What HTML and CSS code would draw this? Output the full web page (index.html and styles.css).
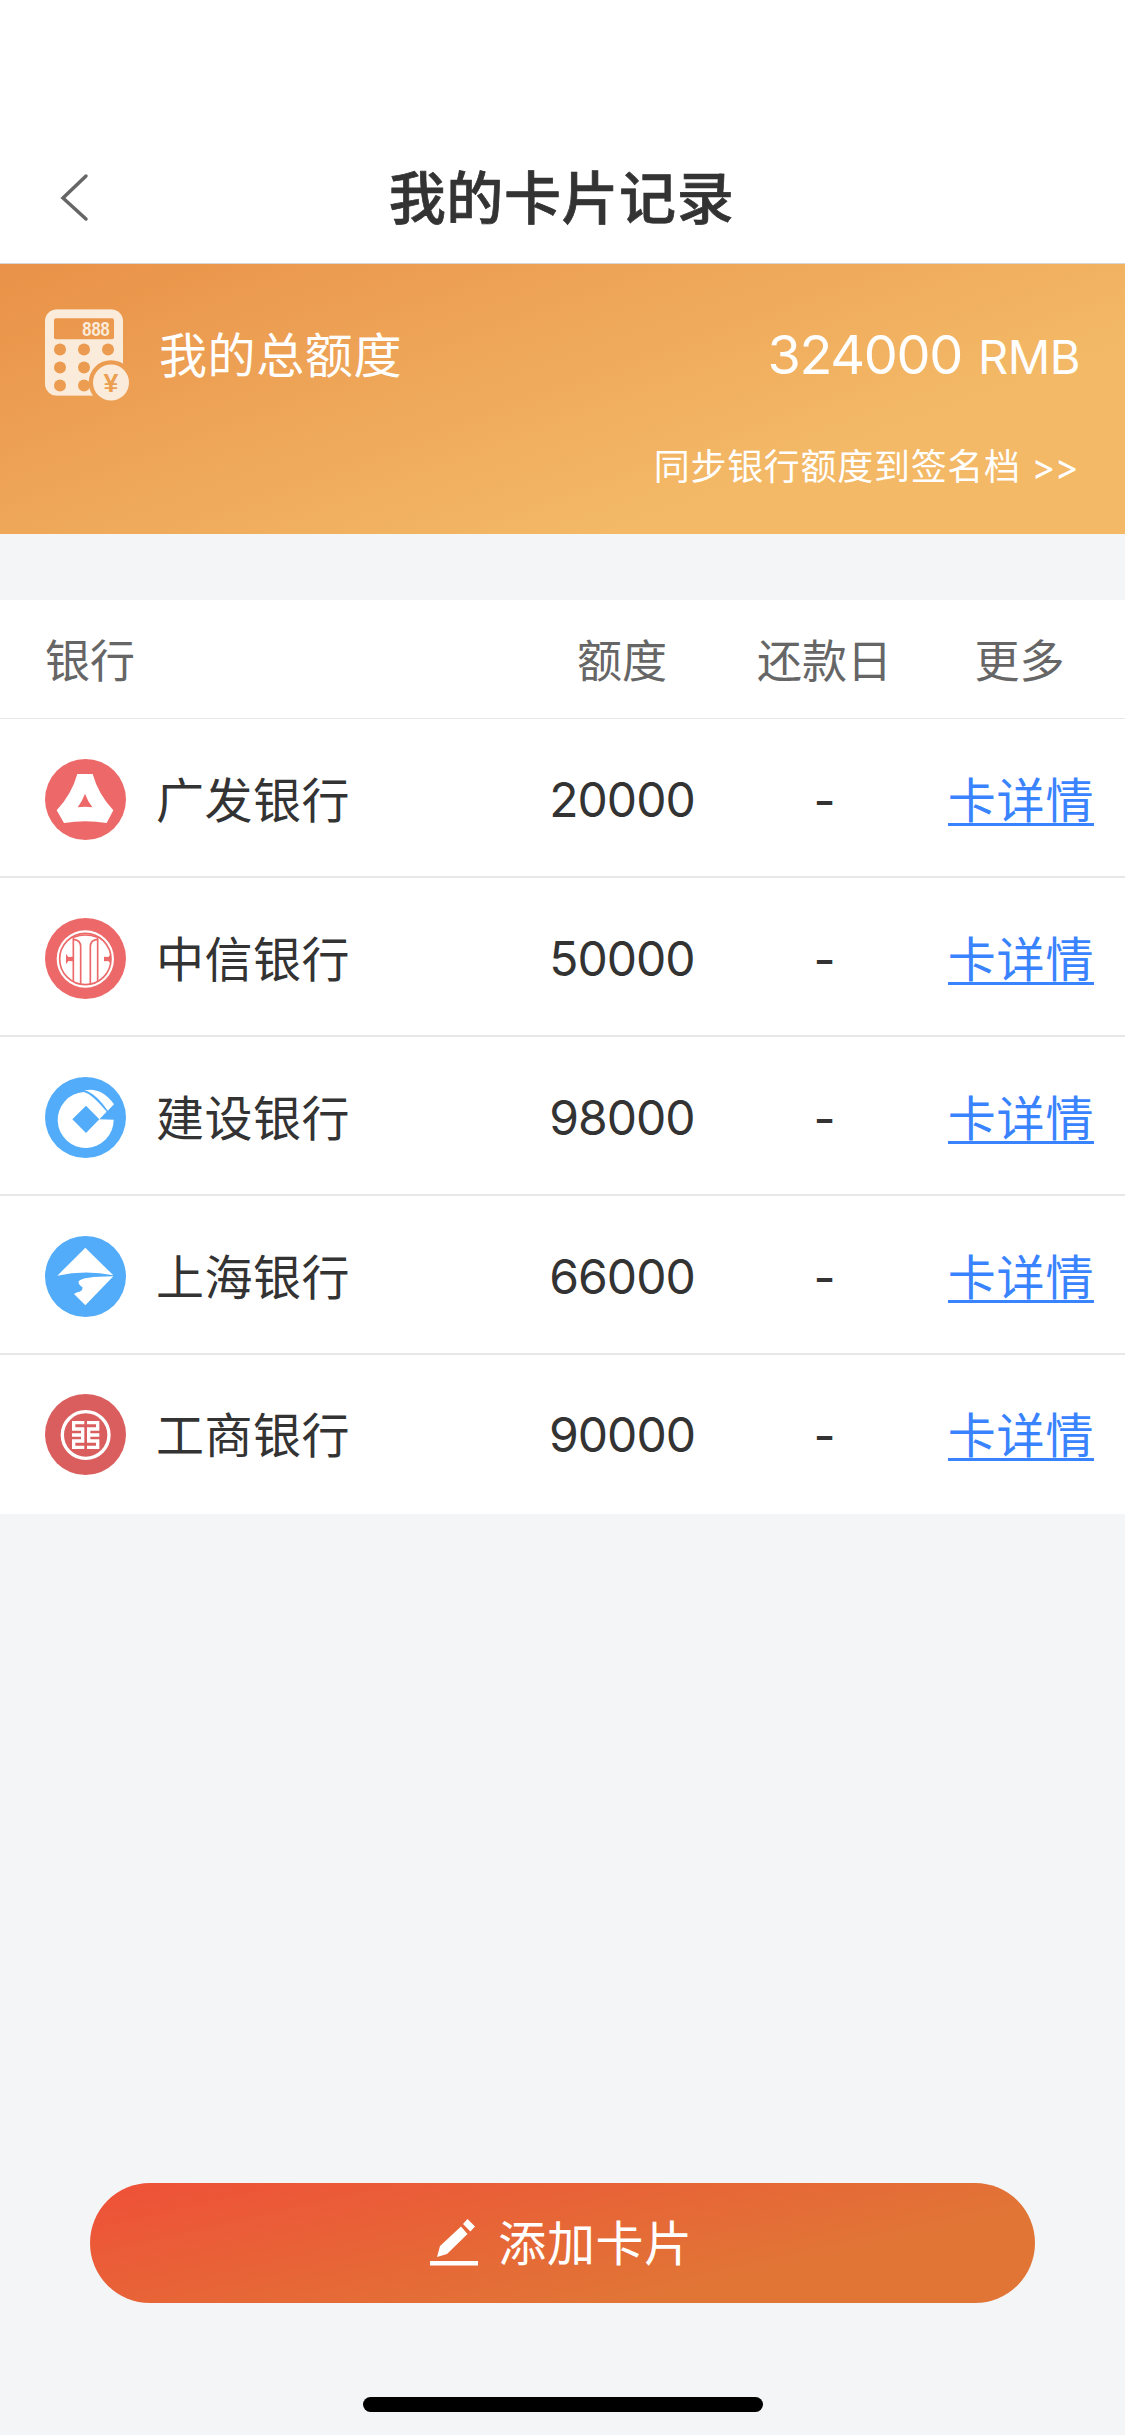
FILE: index.html
```html
<!DOCTYPE html>
<html lang="zh-CN">
<head>
    <meta charset="UTF-8">
    <meta name="viewport" content="width=device-width, initial-scale=1.0">
    <title>我的卡片记录</title>
    <link rel="stylesheet" href="styles.css">
</head>
<body>
    <header class="navbar">
        <a href="#" class="back" aria-label="返回">
            <svg width="29" height="49" viewBox="0 0 29 49"><path d="M26 3 3 25l23 21"/></svg>
        </a>
        <h1 class="title">我的卡片记录</h1>
    </header>

    <section class="summary">
        <div class="summary-row">
            <svg class="calc-icon" viewBox="0 0 252 275">
                <defs>
                    <mask id="calc-mask">
                        <rect width="234" height="260" rx="36" fill="#fff"/>
                        <g fill="#000">
                            <rect x="27" y="27" width="180" height="63" rx="6"/>
                            <circle cx="45" cy="121" r="18"/><circle cx="117" cy="121" r="18"/><circle cx="189" cy="121" r="18"/>
                            <circle cx="45" cy="175" r="18"/><circle cx="117" cy="175" r="18"/>
                            <circle cx="45" cy="229" r="18"/><circle cx="117" cy="229" r="18"/>
                            <circle cx="198" cy="220" r="67"/>
                        </g>
                    </mask>
                </defs>
                <rect width="234" height="260" mask="url(#calc-mask)"/>
                <text class="calc-digits" x="112" y="81" textLength="82" lengthAdjust="spacingAndGlyphs">888</text>
                <circle cx="198" cy="220" r="54"/>
                <text class="calc-yen" x="198" y="249" text-anchor="middle">¥</text>
            </svg>
            <span class="summary-label">我的总额度</span>
            <span class="summary-amount">324000 <small>RMB</small></span>
        </div>
        <a href="#" class="sync-link">同步银行额度到签名档 <span>&gt;&gt;</span></a>
    </section>

    <main class="cards">
        <div class="row head">
            <span>银行</span><span>额度</span><span>还款日</span><span>更多</span>
        </div>
        <div class="row">
            <div class="bank">
                <svg class="bank-icon" viewBox="0 0 243 243">
                    <circle cx="121.500" cy="121.500" r="121.500" fill="#ed6969"/>
                    <path fill="#fff" fill-rule="evenodd" d="M97 45h46q17 61 62 109l-20 38q-64-11-128 0l-22-38q45-48 62-109zM120 104q-8 22-22 41 22-4 44 0-14-19-22-41z"/>
                </svg>
                <span>广发银行</span>
            </div>
            <span class="num">20000</span><span class="day">-</span><a href="#" class="detail">卡详情</a>
        </div>
        <div class="row">
            <div class="bank">
                <svg class="bank-icon" viewBox="0 0 243 243">
                    <circle cx="121.500" cy="121.500" r="121.500" fill="#ed6969"/>
                    <circle cx="121" cy="123" r="86" fill="#fff"/>
                    <g fill="none" stroke="#ed6969" stroke-width="5">
                        <circle cx="121" cy="123" r="77"/>
                        <path d="M85 56v136M158 56v136M87 64q20 3 20 22v112M156 64q-20 3-20 22v112M86 58q35-14 71 0"/>
                    </g>
                    <path fill="#ed6969" d="M63 107l7 10 15-1v14l-15-1-7 10zM177 116l13 1 8-10v32l-8-10-13 1z"/>
                </svg>
                <span>中信银行</span>
            </div>
            <span class="num">50000</span><span class="day">-</span><a href="#" class="detail">卡详情</a>
        </div>
        <div class="row">
            <div class="bank">
                <svg class="bank-icon" viewBox="0 0 243 243">
                    <circle cx="121.500" cy="121.500" r="121.500" fill="#52acfa"/>
                    <path fill="#fff" d="M206 128A84 84 0 1 1 116 45Q140 50 185 104L163 127 123 86 82 127 123 168 163 127z"/>
                    <path fill="#fff" d="M118 40Q170 29 207 82L188 101Q150 47 118 40z"/>
                </svg>
                <span>建设银行</span>
            </div>
            <span class="num">98000</span><span class="day">-</span><a href="#" class="detail">卡详情</a>
        </div>
        <div class="row">
            <div class="bank">
                <svg class="bank-icon" viewBox="0 0 243 243">
                    <circle cx="121.500" cy="121.500" r="121.500" fill="#52acfa"/>
                    <path fill="#fff" d="M121 35 205 118Q121 100 37 119zM205 121 121 208 87 174Q94 168 104 167 115 162 112 153 99 145 101 136 110 122 205 121z"/>
                </svg>
                <span>上海银行</span>
            </div>
            <span class="num">66000</span><span class="day">-</span><a href="#" class="detail">卡详情</a>
        </div>
        <div class="row">
            <div class="bank">
                <svg class="bank-icon" viewBox="0 0 243 243">
                    <circle cx="121.500" cy="121.500" r="121.500" fill="#db5e5e"/>
                    <g fill="none" stroke="#fff" stroke-width="10">
                        <circle cx="122" cy="123" r="70"/>
                        <path d="M118 86H86v19h27v36H86v19h32M126 86h32v19h-27v36h27v19h-32M81 123h32M163 123h-32"/>
                    </g>
                </svg>
                <span>工商银行</span>
            </div>
            <span class="num">90000</span><span class="day">-</span><a href="#" class="detail">卡详情</a>
        </div>
    </main>

    <footer class="bottom">
        <button type="button" class="add-btn">
            <svg class="pencil" viewBox="0 0 48 48">
                <path d="M0 42h48v4.500H0zM7 38l3-11L31 7.500l6.500 7.500L17 35zM33 5l4.500-5L45 7.500l-4.600 5z"/>
            </svg>
            <span>添加卡片</span>
        </button>
        <div class="home-indicator"></div>
    </footer>
</body>
</html>
```
FILE: styles.css
```css
:root {
    --text: #333333;
    --muted: #666666;
    --link: #3a83ff;
    --line: #e6e7e9;
    --page: #f3f5f7;
}

* {
    box-sizing: border-box;
}

body {
    margin: 0;
    min-height: 2435px;
    display: flex;
    flex-direction: column;
    background: var(--page);
    color: var(--text);
    font-family: Inter, "Noto Sans CJK SC", sans-serif;
    font-size: 48px;
    line-height: 1;
}

a {
    color: inherit;
    text-decoration: none;
}

/* top bar */
.navbar {
    height: 264px;
    padding: 132px 60px 0;
    display: grid;
    grid-template-columns: 60px 1fr 60px;
    align-items: center;
    background: #fff;
    border-bottom: 1px solid #d9d5d2;
}

.back svg {
    display: block;
    fill: none;
    stroke: #666;
    stroke-width: 3.5;
    stroke-linecap: round;
}

.title {
    margin: 0;
    padding: 0 2px 6px 0;
    text-align: center;
    font-family: "Noto Sans CJK SC", sans-serif;
    font-size: 57px;
    font-weight: 500;
    line-height: 1;
    letter-spacing: 0.6px;
    -webkit-text-stroke: 0.7px;
}

/* total limit */
.summary {
    height: 270px;
    padding: 45px 45px 0;
    color: #fff;
    background: linear-gradient(160deg, #e99148 0%, #f3b966 72%);
}

.summary-row {
    display: flex;
    align-items: center;
    height: 92px;
}

.calc-icon {
    width: 84px;
    height: 92px;
    margin-right: 30px;
    fill: #faebda;
}

.calc-digits {
    font: bold 58px "Liberation Sans", sans-serif;
}

.calc-yen {
    font: bold 80px "Liberation Sans", sans-serif;
    fill: #ec9f50;
}

.summary-label {
    padding-top: 2px;
    letter-spacing: 0.6px;
}

.summary-amount {
    margin-left: auto;
    font-size: 54px;
    letter-spacing: -1.3px;
}

.summary-amount small {
    margin-left: 2px;
    font-size: 47px;
    letter-spacing: -0.5px;
}

.sync-link {
    display: block;
    margin: 48px 2px 0 0;
    text-align: right;
    font-size: 36px;
    letter-spacing: 0.7px;
}

.sync-link span {
    letter-spacing: -0.6px;
}

/* card table */
.cards {
    margin-top: 66px;
    background: #fff;
}

.row {
    height: 159px;
    padding: 4px 8px 0 45px;
    display: grid;
    grid-template-columns: 475px 204px 201px 1fr;
    align-items: center;
    justify-items: center;
    border-bottom: 2px solid var(--line);
}

.row > :first-child {
    justify-self: start;
}

.row:last-child {
    padding-top: 0;
    border-bottom: 0;
}

.head {
    height: 119px;
    padding-right: 11px;
    border-bottom-width: 1px;
    color: var(--muted);
    font-size: 45px;
}

.bank {
    display: flex;
    align-items: center;
    gap: 30px;
    letter-spacing: 0.5px;
}

.bank span {
    padding-top: 2px;
}

.bank-icon {
    width: 81px;
    height: 81px;
}

.num {
    letter-spacing: -1px;
}

.day {
    padding-top: 3px;
}

.detail {
    height: 49px;
    margin-top: 3px;
    color: var(--link);
    border-bottom: 3px solid;
    letter-spacing: 0.8px;
}

/* bottom action */
.bottom {
    margin-top: auto;
    padding: 0 90px 23px;
}

.add-btn {
    width: 100%;
    height: 120px;
    padding: 0 2px 0 0;
    display: flex;
    align-items: center;
    justify-content: center;
    gap: 20px;
    border: 0;
    border-radius: 60px;
    color: #fff;
    font: inherit;
    letter-spacing: 0.6px;
    background: linear-gradient(167deg, #ef5038 0%, #e17536 72%);
}

.add-btn span {
    padding-top: 2px;
}

.pencil {
    width: 48px;
    height: 48px;
    fill: #fff;
}

.home-indicator {
    width: 400px;
    height: 15px;
    margin: 94px auto 0;
    border-radius: 8px;
    background: #000;
}
```
